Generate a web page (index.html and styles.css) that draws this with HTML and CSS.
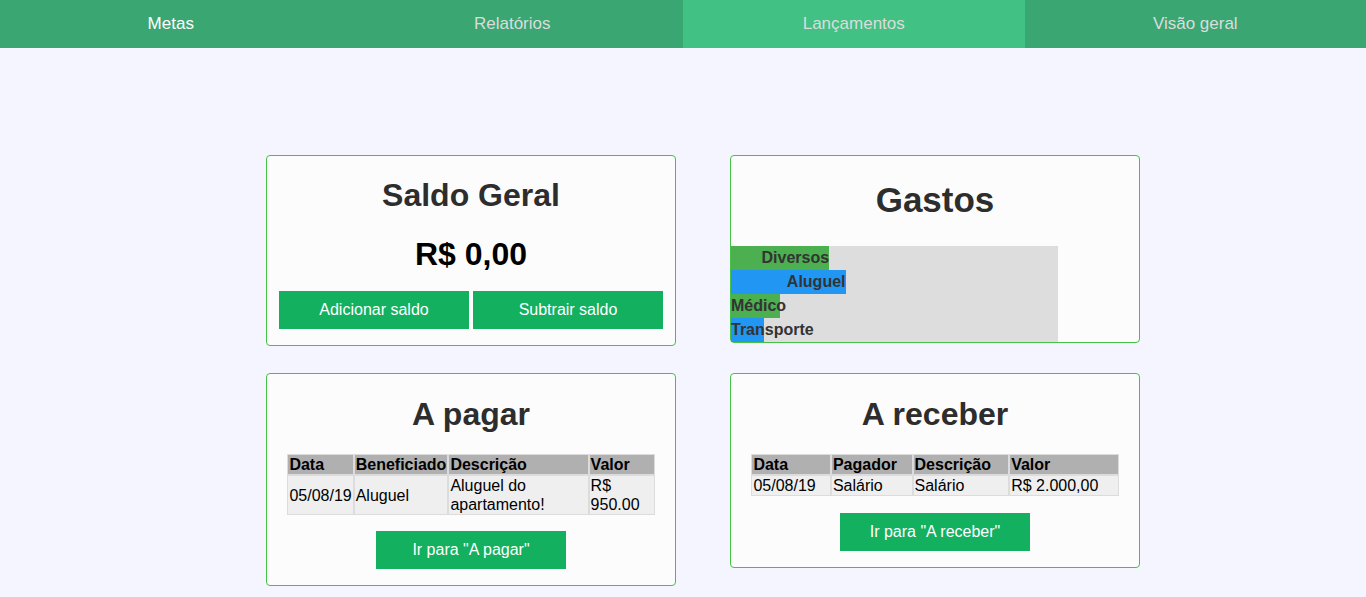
FILE: index.html
```html
<!DOCTYPE html>
<html lang="pt-BR">
<head>
<meta charset="utf-8">
<title>Lançamentos</title>
<link rel="stylesheet" href="styles.css">
</head>
<body>
<nav class="topnav">
  <a class="tab tab-current">Metas</a>
  <a class="tab">Relatórios</a>
  <a class="tab tab-active">Lançamentos</a>
  <a class="tab">Visão geral</a>
</nav>
<main class="dashboard">
  <section class="card card-saldo">
    <h2 class="card-title">Saldo Geral</h2>
    <p class="saldo-value">R$ 0,00</p>
    <div class="btn-row">
      <button class="btn">Adicionar saldo</button>
      <button class="btn">Subtrair saldo</button>
    </div>
  </section>
  <section class="card card-gastos">
    <h2 class="card-title gastos-title">Gastos</h2>
    <div class="chart">
      <div class="bar bar-green" style="width:30%">Diversos</div>
      <div class="bar bar-blue" style="width:35%">Aluguel</div>
      <div class="bar bar-green" style="width:15%">Médico</div>
      <div class="bar bar-blue" style="width:10%">Transporte</div>
    </div>
  </section>
  <section class="card card-table">
    <h2 class="card-title">A pagar</h2>
    <table class="data-table">
      <thead>
        <tr><th>Data</th><th>Beneficiado</th><th>Descrição</th><th>Valor</th></tr>
      </thead>
      <tbody>
        <tr><td>05/08/19</td><td>Aluguel</td><td>Aluguel do apartamento!</td><td>R$ 950.00</td></tr>
      </tbody>
    </table>
    <button class="btn btn-center">Ir para "A pagar"</button>
  </section>
  <section class="card card-table card-receber">
    <h2 class="card-title">A receber</h2>
    <table class="data-table">
      <thead>
        <tr><th>Data</th><th>Pagador</th><th>Descrição</th><th>Valor</th></tr>
      </thead>
      <tbody>
        <tr><td>05/08/19</td><td>Salário</td><td>Salário</td><td>R$ 2.000,00</td></tr>
      </tbody>
    </table>
    <button class="btn btn-center">Ir para "A receber"</button>
  </section>
</main>
</body>
</html>
```
FILE: styles.css
```css
* { box-sizing: border-box; }

body {
  margin: 0;
  background: #f4f5fe;
  font-family: "Liberation Sans", Arial, sans-serif;
  font-size: 16px;
  color: #000;
}

.topnav {
  display: flex;
  height: 48px;
  background: #3aa672;
}

.tab {
  flex: 1 1 0;
  text-align: center;
  line-height: 48px;
  font-size: 17px;
  color: #dcdcdc;
  text-decoration: none;
}

.tab-current { color: #ffffff; }

.tab-active { background: #41c183; }

.dashboard {
  display: grid;
  grid-template-columns: 410px 410px;
  column-gap: 54px;
  row-gap: 27px;
  align-items: start;
  padding: 107px 0 0 266px;
}

.card {
  background: #fcfcfd;
  border: 1px solid #45c145;
  border-radius: 4px;
  text-align: center;
}

.card-title {
  margin: 0;
  font-size: 32px;
  font-weight: bold;
  color: #2d2d2d;
  line-height: 37px;
}

.card-saldo {
  padding: 21px 12px 16px;
}

.saldo-value {
  margin: 22px 0 0;
  font-size: 32px;
  font-weight: bold;
  line-height: 37px;
  color: #000;
}

.btn-row {
  display: flex;
  gap: 4px;
  margin-top: 18px;
}

.btn {
  width: 190px;
  height: 38px;
  border: none;
  border-radius: 0;
  background: #13b060;
  color: #fff;
  font-family: "Liberation Sans", Arial, sans-serif;
  font-size: 16px;
  padding: 0;
}

.card-gastos {
  padding-top: 24px;
  text-align: left;
}

.gastos-title {
  font-size: 35px;
  line-height: 40px;
  text-align: center;
  margin-bottom: 26px;
}

.chart {
  width: 80.2%;
  background: #dddddd;
}

.bar {
  height: 24px;
  line-height: 24px;
  font-weight: bold;
  color: #333;
  text-align: right;
  white-space: nowrap;
}

.bar-green { background: #4caf50; }
.bar-blue { background: #2196f3; }

.card-table {
  padding: 22px 0 16px;
}

.data-table {
  width: 90%;
  margin: 21px auto 0;
  border-collapse: separate;
  border-spacing: 0;
  text-align: left;
}

.data-table th,
.data-table td {
  border: 1px solid #dcdcdc;
  padding: 0 1px;
  line-height: 19px;
  font-size: 16px;
  color: #000;
}

.data-table th {
  background: #b0b0b0;
  font-weight: bold;
}

.data-table td {
  background: #efefef;
  vertical-align: middle;
}

.btn-center {
  display: block;
  margin: 16px auto 0;
}

.card-receber .btn-center {
  margin-top: 17px;
}
```
